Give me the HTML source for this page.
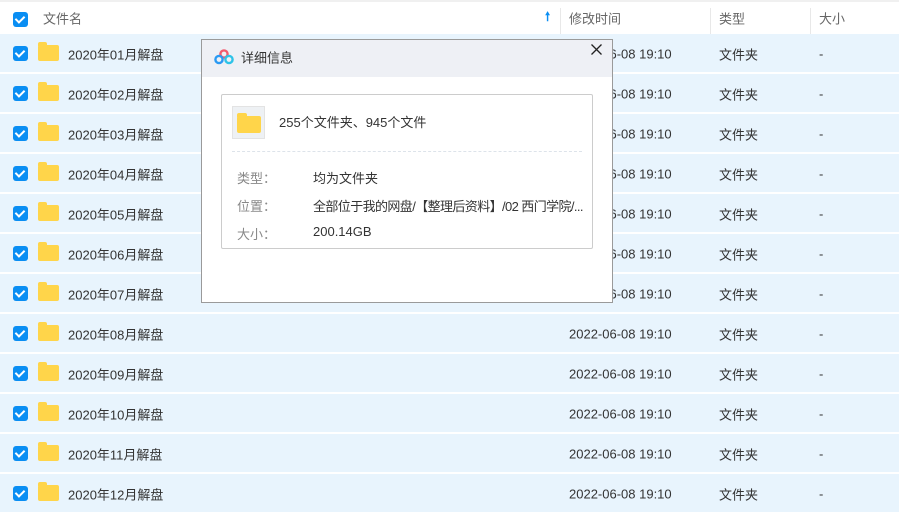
<!DOCTYPE html>
<html><head><meta charset="utf-8"><style>
*{margin:0;padding:0;box-sizing:border-box}
body{width:899px;height:520px;background:#fff;font-family:"Liberation Sans","Noto Sans CJK SC",sans-serif;font-size:13px;color:#333;position:relative;overflow:hidden}
.hdr{position:absolute;left:0;top:0;width:899px;height:34px;border-top:2px solid #f0f0f0;color:#666}
.cb{position:absolute;width:15px;height:15px;background:#0a8ef3;border-radius:3px}
.cb:after{content:"";position:absolute;left:4px;top:2px;width:4px;height:7px;border:solid #fff;border-width:0 2px 2px 0;transform:rotate(45deg)}
.row{position:absolute;left:0;width:899px;height:38px;background:#e8f4fd}
.t{position:absolute;top:50%;transform:translateY(-50%);white-space:nowrap}
.fold{position:absolute;left:38px;top:11px;width:21px;height:16px;background:#ffd54a;border-radius:2px}
.fold:before{content:"";position:absolute;left:0;top:-3px;width:9px;height:4px;background:#ffd54a;border-radius:2px 2px 0 0}
.div{position:absolute;top:6px;width:1px;height:28px;background:#e8e8e8}
.dlg{position:absolute;left:201px;top:39px;width:412px;height:264px;background:#fff;border:1px solid #9a9a9a}
.tb{height:37px;background:#eef0f5;position:relative}
.box{position:absolute;left:19px;top:54px;width:372px;height:155px;border:1px solid #ccc;border-radius:2px}
.lbl{position:absolute;left:15px;color:#888;white-space:nowrap}
.val{position:absolute;left:91px;color:#333;white-space:nowrap}
</style></head><body>
<div class="hdr">
<div class="cb" style="left:13px;top:10px"></div>
<span class="t" style="left:43px">文件名</span>
<span class="t" style="left:545px;color:#0a8ef3;font-size:12px;font-weight:bold">🠕</span>
<div class="div" style="left:560px"></div>
<span class="t" style="left:569px">修改时间</span>
<div class="div" style="left:710px"></div>
<span class="t" style="left:719px">类型</span>
<div class="div" style="left:810px"></div>
<span class="t" style="left:819px">大小</span>
</div>
<div id="rows"></div>
<script>
var h='';for(var i=0;i<12;i++){var m=(i<9?'0':'')+(i+1);h+='<div class="row" style="top:'+(34+i*40)+'px"><div class="cb" style="left:13px;top:12px"></div><div class="fold"></div><span class="t" style="left:68px;margin-top:1px">2020年'+m+'月解盘</span><span class="t" style="left:569px;margin-top:1px">2022-06-08 19:10</span><span class="t" style="left:719px;margin-top:1px">文件夹</span><span class="t" style="left:819px;margin-top:1px">-</span></div>';}
document.getElementById('rows').innerHTML=h;
</script>
<div class="dlg">
<div class="tb">
<svg style="position:absolute;left:12px;top:9px" width="20" height="16" viewBox="0 0 20 16"><circle cx="10" cy="5" r="3.6" fill="none" stroke="#f25a6e" stroke-width="2.4"/><circle cx="5" cy="10.5" r="3.6" fill="none" stroke="#2a9af3" stroke-width="2.4"/><circle cx="15" cy="10.5" r="3.6" fill="none" stroke="#2ec3e8" stroke-width="2.4"/></svg>
<span class="t" style="left:39px;font-size:13px;margin-top:-2px">详细信息</span>
<svg style="position:absolute;left:389px;top:4px" width="11" height="11" viewBox="0 0 11 11"><path d="M0.5 0.5L10.5 10.5M10.5 0.5L0.5 10.5" stroke="#222" stroke-width="1.3"/></svg>
</div>
<div class="box">
<div style="position:absolute;left:10px;top:11px;width:33px;height:33px;border:1px solid #e3e3e3;background:#eef1f4"><div style="position:absolute;left:4px;top:9px;width:24px;height:17px;background:#ffd54a;border-radius:2px"></div><div style="position:absolute;left:4px;top:6px;width:10px;height:4px;background:#ffd54a;border-radius:2px 2px 0 0"></div></div>
<span style="position:absolute;left:57px;top:17px;white-space:nowrap">255个文件夹、945个文件</span>
<div style="position:absolute;left:10px;right:10px;top:56px;border-top:1px dashed #dde3ea"></div>
<span class="lbl" style="top:73px">类型：</span><span class="val" style="top:73px">均为文件夹</span>
<span class="lbl" style="top:101px">位置：</span><span class="val" style="top:101px;letter-spacing:-0.6px">全部位于我的网盘/【整理后资料】/02 西门学院/...</span>
<span class="lbl" style="top:129px">大小：</span><span class="val" style="top:129px">200.14GB</span>
</div>
</div>
</body></html>
